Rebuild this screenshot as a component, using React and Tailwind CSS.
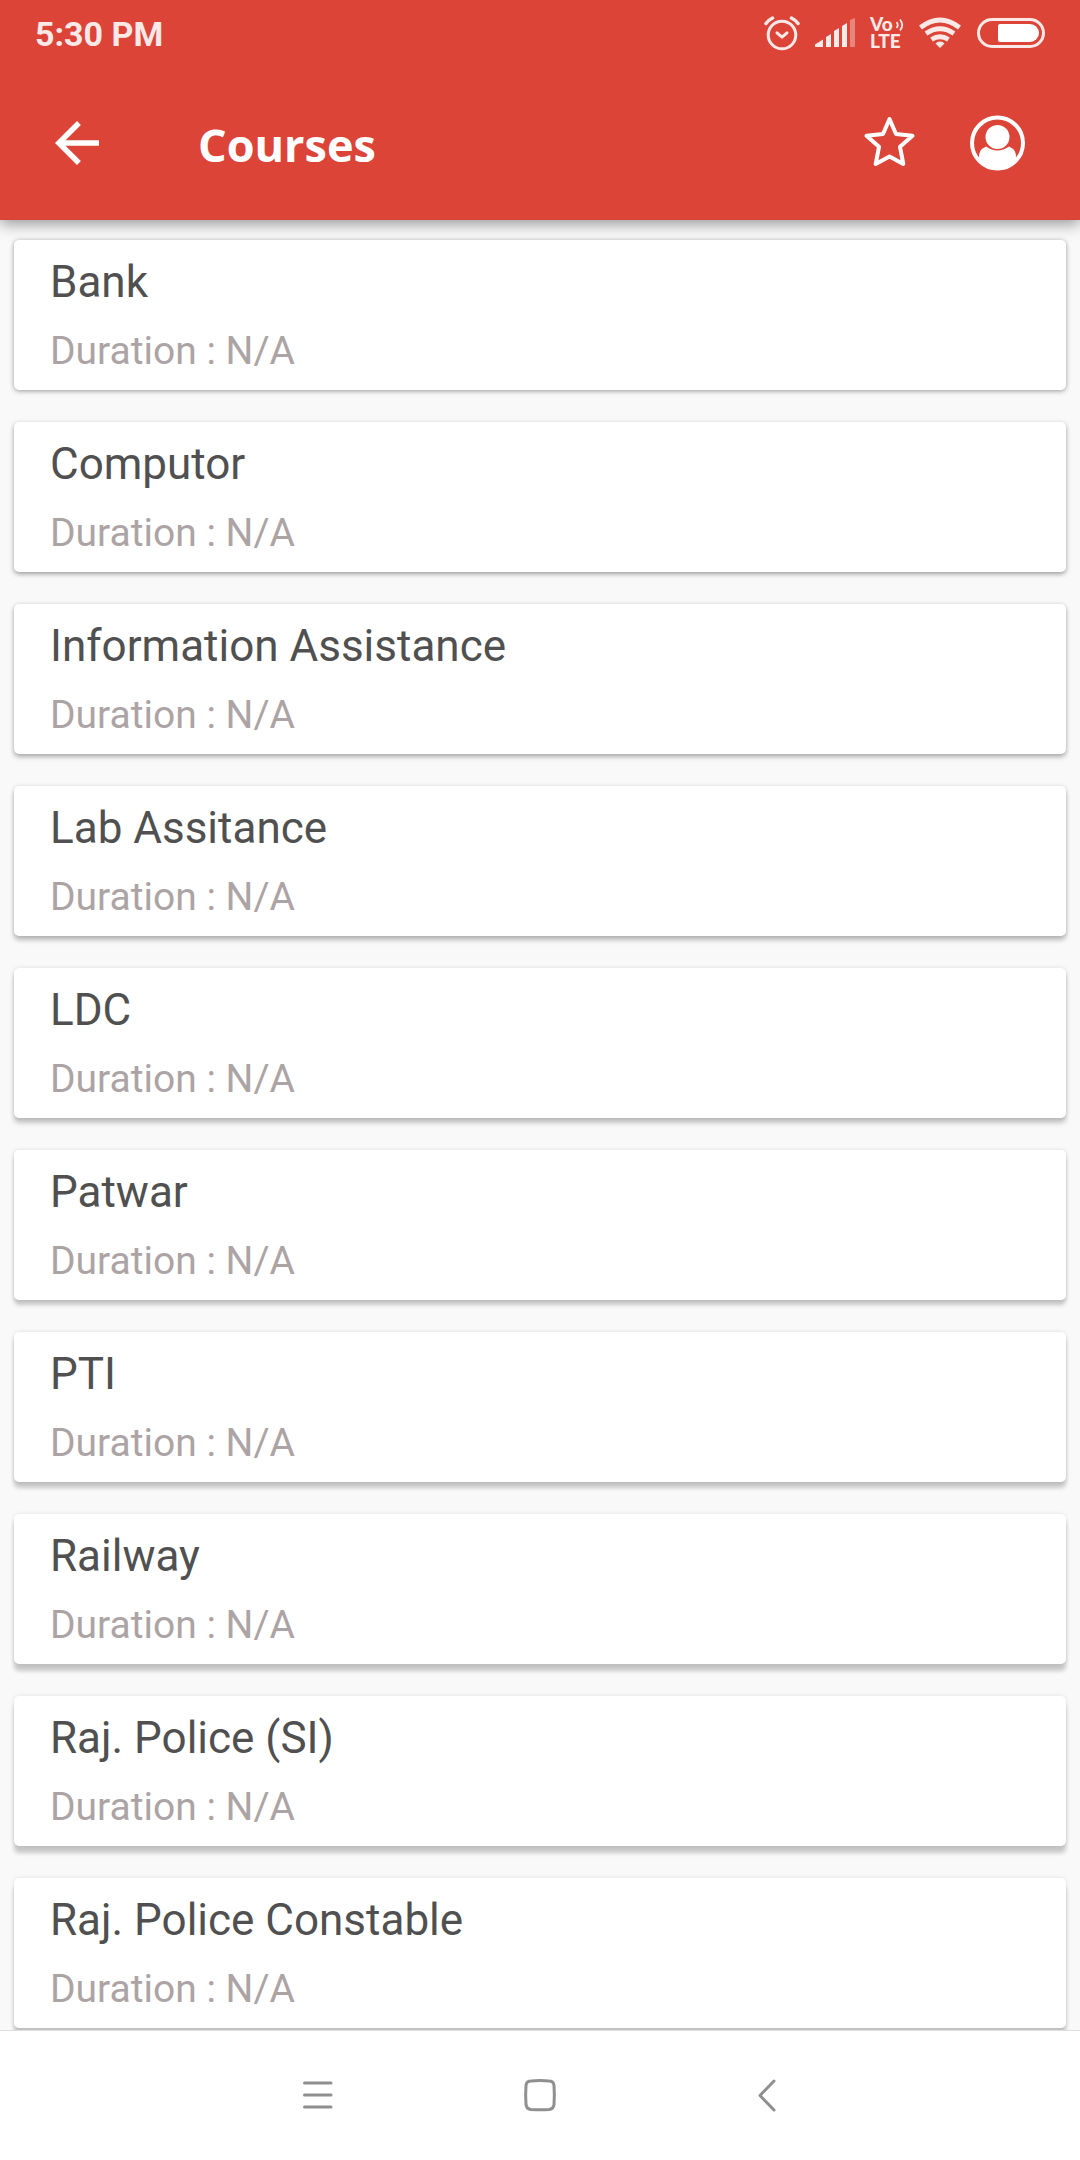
import React from 'react'

// the shadow falls further the lower the card sits on the screen
const courses = [
  { name: 'Bank', shadow: 'shadow-[0_1px_5px_rgba(0,0,0,0.4)]' },
  { name: 'Computor', shadow: 'shadow-[0_2px_5px_rgba(0,0,0,0.38)]' },
  { name: 'Information Assistance', shadow: 'shadow-[0_3px_5px_rgba(0,0,0,0.28),0_0_4px_rgba(0,0,0,0.12)]' },
  { name: 'Lab Assitance', shadow: 'shadow-[0_4px_5px_rgba(0,0,0,0.25),0_0_4px_rgba(0,0,0,0.12)]' },
  { name: 'LDC', shadow: 'shadow-[0_5px_5px_rgba(0,0,0,0.22),0_0_4px_rgba(0,0,0,0.12)]' },
  { name: 'Patwar', shadow: 'shadow-[0_5px_4px_rgba(0,0,0,0.2),0_0_4px_rgba(0,0,0,0.12)]' },
  { name: 'PTI', shadow: 'shadow-[0_6px_4px_rgba(0,0,0,0.2),0_0_4px_rgba(0,0,0,0.12)]' },
  { name: 'Railway', shadow: 'shadow-[0_7px_4px_rgba(0,0,0,0.2),0_0_4px_rgba(0,0,0,0.1)]' },
  { name: 'Raj. Police (SI)', shadow: 'shadow-[0_7px_4px_rgba(0,0,0,0.2),0_0_4px_rgba(0,0,0,0.1)]' },
  { name: 'Raj. Police Constable', shadow: 'shadow-[0_8px_4px_rgba(0,0,0,0.2),0_0_4px_rgba(0,0,0,0.1)]' },
]

const StatusIcons = () => (
  <svg width="282" height="42" viewBox="764 12 282 42" fill="none" className="text-[#fbe9e7]" aria-hidden="true">
    {/* alarm */}
    <g stroke="currentColor" strokeWidth="3" strokeLinecap="round">
      <circle cx="782" cy="35" r="13.8" />
      <path d="M777 32.800l5 4.400 5-4.400" strokeLinejoin="round" />
      <path d="M766 23.500q2.500-3.500 6.500-5.500M798 23.500q-2.500-3.500-6.500-5.500" strokeWidth="3.500" />
    </g>
    {/* signal */}
    <g fill="currentColor">
      <path d="M815 44.500l8-5v7.500h-8z" />
      <path d="M826 37l5-3v13h-5zM834 31l5-3v19h-5zM842 26l5-3v24h-5z" />
      <path d="M850 20l5-2v29h-5z" opacity="0.4" />
    </g>
    {/* volte */}
    <text fill="currentColor" fontFamily="Lato, sans-serif" fontWeight="900" fontSize="19">
      <tspan x="870" y="31">Vo</tspan>
      <tspan x="870" y="48">LTE</tspan>
    </text>
    <path d="M896.500 22q2.500 3 0 6M900 19.500q4.500 5.500 0 11" stroke="currentColor" strokeWidth="1.800" />
    {/* wifi */}
    <g stroke="currentColor" strokeWidth="4.800">
      <path d="M920.500 27.500q19.500-15 39 0M926 33.500q14-9.500 28 0M931.500 39.500q8.500-5.500 17 0" />
      <path d="M940 41.500q3 0 4.500 2l-4.500 4.500-4.500-4.500q1.500-2 4.500-2z" fill="currentColor" stroke="none" />
    </g>
    {/* battery */}
    <rect x="978.500" y="19.500" width="65" height="27" rx="13.500" stroke="currentColor" strokeWidth="3" />
    <path d="M1000 24h30a9 9 0 0 1 0 18h-30q-2 0-2-2v-14q0-2 2-2z" fill="#fff" />
  </svg>
)

const CourseCard = ({ name, shadow }) => (
  <li className={`rounded-[5px] bg-white px-9 pt-4 pb-3.5 ${shadow}`}>
    <h2 className="text-[44px] leading-[52px] text-[#505050]">{name}</h2>
    <p className="mt-[18px] text-[39px] leading-[50px] text-[#aca4a4]">Duration : N/A</p>
  </li>
)

const App = () => {
  return (
    <div className="flex h-screen flex-col overflow-hidden bg-[#f9f9f9] font-[Roboto,sans-serif]">
      <header className="relative z-10 bg-[#dc4438] text-white shadow-[0_4px_14px_rgba(0,0,0,0.4)]">
        {/* status bar */}
        <div className="flex h-[66px] items-center justify-between pr-[34px] pl-[35px]">
          <span className="pt-0.5 text-[34px] leading-10 font-bold text-[#fbe9e7]">5:30 PM</span>
          <StatusIcons />
        </div>

        {/* toolbar */}
        <div className="flex h-[154px] items-center px-11">
          <button type="button" aria-label="Back">
            <svg width="66" height="66" viewBox="0 0 24 24" fill="currentColor">
              <path d="M20 11H7.830l5.590-5.590L12 4l-8 8 8 8 1.410-1.410L7.830 13H20v-2z" />
            </svg>
          </button>
          <h1 className="ml-[88px] flex-1 pt-1 font-['Open_Sans',sans-serif] text-[45px] leading-[56px] font-bold">Courses</h1>
          <div className="flex items-center gap-[46px] pr-2">
            <button type="button" aria-label="Favourites">
              <svg width="62" height="62" viewBox="0 0 62 62" fill="none" stroke="currentColor" strokeWidth="4" strokeLinejoin="round">
                <path d="M31.500 7l6.500 15 16.500 1.800-12.500 11L45.300 52 31.500 44.500 17.700 52l3.300-17.200L8.500 23.800 25 22z" />
              </svg>
            </button>
            <button type="button" aria-label="Profile">
              <svg width="62" height="62" viewBox="0 0 62 62" fill="currentColor">
                <circle cx="31.500" cy="31" r="25.500" fill="none" stroke="currentColor" strokeWidth="4" />
                <circle cx="31.500" cy="25" r="12" />
                <path d="M13 46q-1-8 7-11.500 11.500 8 23 0 8 3.500 7 11.500-7 11-18.500 11t-18.500-11z" />
              </svg>
            </button>
          </div>
        </div>
      </header>

      {/* course list */}
      <main className="min-h-0 flex-1 overflow-hidden px-3.5 pt-5">
        <ul className="flex flex-col gap-8">
          {courses.map((course) => (
            <CourseCard key={course.name} name={course.name} shadow={course.shadow} />
          ))}
        </ul>
      </main>

      {/* system navigation */}
      <nav className="relative z-10 flex h-[130px] items-center justify-center gap-[164px] border-t border-[#dedede] bg-white text-[#8f8f8f]">
        <button type="button" aria-label="Recent apps">
          <svg width="60" height="60" viewBox="0 0 60 60" stroke="currentColor" strokeWidth="3" strokeLinecap="round">
            <path d="M18.500 17h26.500M18.500 29h26.500M18.500 41h26.500" />
          </svg>
        </button>
        <button type="button" aria-label="Home">
          <svg width="60" height="60" viewBox="0 0 60 60" fill="none" stroke="currentColor" strokeWidth="3">
            <path d="M21 15q9-1 18 0 4.500 0 5 4.500 .7 9.500 0 19-.5 4.500-5 5-9 .7-18 0-4.500-.5-5-5-.7-9.500 0-19 .5-4.500 5-4.500z" />
          </svg>
        </button>
        <button type="button" aria-label="Go back">
          <svg width="60" height="60" viewBox="0 0 60 60" fill="none" stroke="currentColor" strokeWidth="3" strokeLinecap="round" strokeLinejoin="round">
            <path d="M40 15L26 29.500 40 44" />
          </svg>
        </button>
      </nav>
    </div>
  )
}

export default App
